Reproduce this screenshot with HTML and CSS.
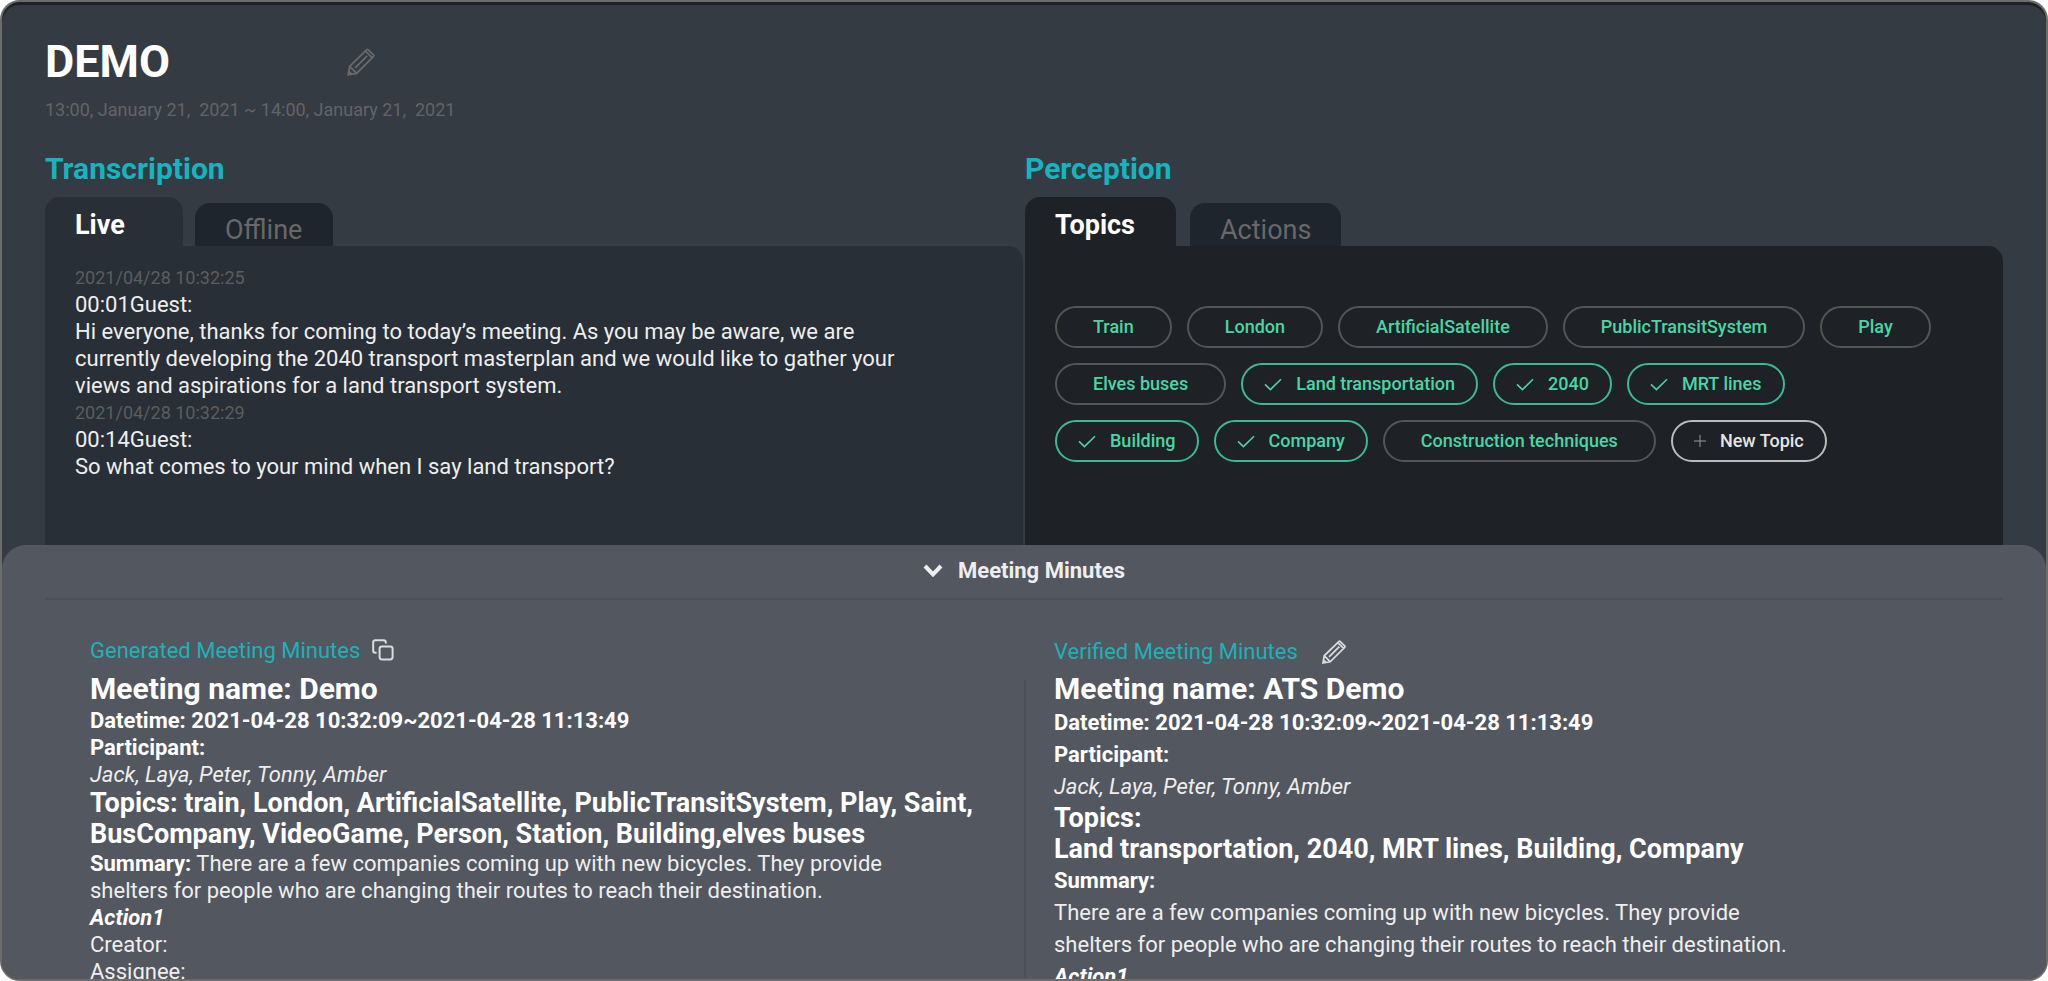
FILE: index.html
```html
<!DOCTYPE html>
<html lang="en">
<head>
<meta charset="utf-8">
<title>DEMO</title>
<link rel="stylesheet" href="styles.css">
</head>
<body>
<svg class="symbols" aria-hidden="true">
  <symbol id="pencil" viewBox="0 0 28 28">
    <path d="M1.2 26.8 2.6 18.4 19.6 1.8Q20.4 1 21.3 1.8L26.4 6.8Q27.2 7.7 26.4 8.6L9.6 25.4Z M2.8 18.6 9.4 25.2 M2 23.4 4.6 26 M18.4 3 25.2 9.8 M8.2 19.8 20.2 7.8"/>
  </symbol>
  <symbol id="check" viewBox="0 0 18 13">
    <path d="M1 6.4 6.4 11.6 17 1.2"/>
  </symbol>
</svg>
<div class="app">
  <header class="head">
    <div class="title-row">
      <h1 class="title">DEMO</h1>
      <button class="icon-btn dim" type="button" aria-label="Edit title"><svg class="pencil"><use href="#pencil"/></svg></button>
    </div>
    <p class="period">13:00, January 21,&nbsp; 2021 ~ 14:00, January 21,&nbsp; 2021</p>
  </header>

  <main class="columns">
    <section class="column transcription">
      <h2 class="section-title">Transcription</h2>
      <div class="tabs" role="tablist">
        <button class="tab active" type="button" role="tab" aria-selected="true">Live</button>
        <button class="tab" type="button" role="tab" aria-selected="false">Offline</button>
      </div>
      <div class="panel" role="tabpanel">
        <p class="stamp">2021/04/28 10:32:25</p>
        <p>00:01Guest:</p>
        <p>Hi everyone, thanks for coming to today’s meeting. As you may be aware, we are<br>currently developing the 2040 transport masterplan and we would like to gather your<br>views and aspirations for a land transport system.</p>
        <p class="stamp">2021/04/28 10:32:29</p>
        <p>00:14Guest:</p>
        <p>So what comes to your mind when I say land transport?</p>
      </div>
    </section>

    <section class="column perception">
      <h2 class="section-title">Perception</h2>
      <div class="tabs" role="tablist">
        <button class="tab active" type="button" role="tab" aria-selected="true">Topics</button>
        <button class="tab" type="button" role="tab" aria-selected="false">Actions</button>
      </div>
      <div class="panel" role="tabpanel">
        <div class="chips">
          <button class="chip" type="button">Train</button>
          <button class="chip" type="button">London</button>
          <button class="chip" type="button">ArtificialSatellite</button>
          <button class="chip" type="button">PublicTransitSystem</button>
          <button class="chip" type="button">Play</button>
        </div>
        <div class="chips">
          <button class="chip" type="button">Elves buses</button>
          <button class="chip on" type="button" aria-pressed="true"><svg class="check"><use href="#check"/></svg>Land transportation</button>
          <button class="chip on" type="button" aria-pressed="true"><svg class="check"><use href="#check"/></svg>2040</button>
          <button class="chip on" type="button" aria-pressed="true"><svg class="check"><use href="#check"/></svg>MRT lines</button>
        </div>
        <div class="chips">
          <button class="chip on" type="button" aria-pressed="true"><svg class="check"><use href="#check"/></svg>Building</button>
          <button class="chip on" type="button" aria-pressed="true"><svg class="check"><use href="#check"/></svg>Company</button>
          <button class="chip" type="button">Construction techniques</button>
          <button class="chip new" type="button"><svg class="plus" viewBox="0 0 12 12"><path d="M6 0V12M0 6H12"/></svg>New Topic</button>
        </div>
      </div>
    </section>
  </main>

  <section class="sheet">
    <button class="sheet-toggle" type="button" aria-expanded="true">
      <svg class="chevron" viewBox="0 0 20 13"><path d="M2 2 10 10.4 18 2"/></svg>Meeting Minutes
    </button>
    <div class="minutes">
      <article class="generated">
        <div class="minutes-head">
          <h3 class="minutes-title">Generated Meeting Minutes</h3>
          <button class="icon-btn" type="button" aria-label="Copy minutes"><svg class="copy" viewBox="0 0 22 22"><path d="M4.6 13.8H3.4Q1.2 13.8 1.2 11.6V3.4Q1.2 1.2 3.4 1.2H11.6Q13.8 1.2 13.8 3.4V4.4"/><rect x="7.6" y="7.4" width="13" height="13" rx="2.4"/></svg></button>
        </div>
        <h4 class="name">Meeting name: Demo</h4>
        <p class="strong">Datetime: 2021-04-28 10:32:09~2021-04-28 11:13:49</p>
        <p class="strong">Participant:</p>
        <p class="people">Jack, Laya, Peter, Tonny, Amber</p>
        <p class="topics">Topics: train, London, ArtificialSatellite, PublicTransitSystem, Play, Saint,<br>BusCompany, VideoGame, Person, Station, Building,elves buses</p>
        <p><b>Summary:</b> There are a few companies coming up with new bicycles. They provide<br>shelters for people who are changing their routes to reach their destination.</p>
        <p class="strong people">Action1</p>
        <p>Creator:</p>
        <p>Assignee:</p>
      </article>
      <article class="verified">
        <div class="minutes-head">
          <h3 class="minutes-title">Verified Meeting Minutes</h3>
          <button class="icon-btn" type="button" aria-label="Edit minutes"><svg class="pencil small"><use href="#pencil"/></svg></button>
        </div>
        <h4 class="name">Meeting name: ATS Demo</h4>
        <p class="strong">Datetime: 2021-04-28 10:32:09~2021-04-28 11:13:49</p>
        <p class="strong">Participant:</p>
        <p class="people">Jack, Laya, Peter, Tonny, Amber</p>
        <p class="topics">Topics:<br>Land transportation, 2040, MRT lines, Building, Company</p>
        <p class="strong">Summary:</p>
        <p>There are a few companies coming up with new bicycles. They provide<br>shelters for people who are changing their routes to reach their destination.</p>
        <p class="strong people">Action1</p>
      </article>
    </div>
  </section>
</div>
</body>
</html>
```
FILE: styles.css
```css
* { box-sizing: border-box; }
body {
  margin: 0;
  background: #fff;
  font-family: Roboto, "Liberation Sans", sans-serif;
  font-size: 22px;
  line-height: 27px;
  color: #eee;
}
h1, h2, h3, h4, p { margin: 0; }
button { border: 0; margin: 0; background: none; color: inherit; font: inherit; cursor: pointer; }
svg { display: block; fill: none; stroke: currentColor; flex: none; }
.symbols { position: absolute; width: 0; height: 0; }

.app {
  display: flex;
  flex-direction: column;
  height: 100vh;
  overflow: hidden;
  border: 2px solid #6c6c6c;
  border-radius: 20px;
  background: #353b43;
  box-shadow: inset 0 3px 0 #1e2227;
}

.head { padding: 33px 43px 0; }
.title-row { display: flex; align-items: center; }
.title { width: 302px; font-size: 45px; line-height: 54px; font-weight: 700; color: #fff; }
.icon-btn { padding: 0; color: #dcdcdc; }
.icon-btn.dim { color: #6a6a6a; }
.pencil { width: 28px; height: 28px; stroke-width: 1.7; }
.pencil.small { width: 24px; height: 24px; stroke-width: 2; }
.period { margin-top: 9px; font-size: 18px; line-height: 24px; color: #646464; }

.columns { display: grid; grid-template-columns: 1fr 1fr; gap: 2px; margin-top: 29px; padding: 0 43px; }
.column { display: flex; flex-direction: column; }
.section-title { font-size: 30px; line-height: 36px; font-weight: 700; color: #16b4bf; }
.tabs { display: flex; align-items: flex-end; height: 49px; margin-top: 10px; }
.tab {
  height: 43px;
  padding: 10px 30px 0;
  border-radius: 15px 15px 0 0;
  background: #1f252d;
  color: #686868;
  font-size: 27px;
  line-height: 30px;
  text-align: left;
}
.tab.active { height: 49px; padding-bottom: 3px; font-weight: 700; color: #fff; }
.transcription .tabs { gap: 12px; }
.perception .tabs { gap: 14px; }
.transcription .tab { min-width: 138px; }
.perception .tab { min-width: 151px; }
.transcription .active, .transcription .panel { background: #282f36; }
.perception .active, .perception .panel { background: #1e2125; }
.panel { height: 299px; padding: 18px 30px; border-radius: 0 15px 0 0; }
.stamp { font-size: 18px; color: #5d5d5d; }
.perception .panel { display: flex; flex-direction: column; gap: 15px; padding-top: 60px; }

.chips { display: flex; gap: 15px; }
.chip {
  display: flex;
  align-items: center;
  height: 42px;
  padding: 0 36px;
  border: 2px solid #555;
  border-radius: 21px;
  color: #48d6a5;
  font-size: 18px;
  line-height: 24px;
  font-weight: 500;
}
.chip.on, .chip.new { gap: 14px; padding: 0 21px; }
.chip.on { border-color: #3aba91; }
.chip.new { border-color: #bbb; color: #e4e4e4; }
.check { width: 18px; height: 13px; stroke-width: 1.6; }
.plus { width: 12px; height: 12px; color: #999; stroke-width: 1; }

.sheet { flex: 1; min-height: 0; padding: 0 43px; border-radius: 24px 24px 0 0; background: #53575f; overflow: hidden; }
.sheet-toggle {
  display: flex;
  align-items: center;
  justify-content: center;
  gap: 15px;
  width: 100%;
  height: 55px;
  padding: 0 0 3px;
  border-bottom: 2px solid #4b4f58;
  font-weight: 700;
}
.chevron { width: 20px; height: 13px; stroke-width: 4; }
.minutes { display: grid; grid-template-columns: 1fr 1fr; padding-top: 33px; }
.generated { padding-left: 45px; }
.verified {
  padding-left: 30px;
  line-height: 32px;
  background: linear-gradient(#4b4f58, #4b4f58) 0 47px / 2px 100% no-repeat;
}
.minutes-head { display: flex; align-items: center; height: 34px; gap: 12px; }
.verified .minutes-head { height: 38px; gap: 24px; }
.minutes-title { font-size: 22px; font-weight: 400; color: #1fb0b8; }
.copy { width: 22px; height: 22px; stroke-width: 2; }
.name { font-size: 30px; line-height: 36px; font-weight: 700; color: #fff; }
.generated .name { margin-top: 4px; }
.topics { font-size: 27px; line-height: 31px; font-weight: 700; color: #fff; }
.strong { font-weight: 700; color: #fff; }
.people { font-style: italic; }
b { color: #fff; }
```
